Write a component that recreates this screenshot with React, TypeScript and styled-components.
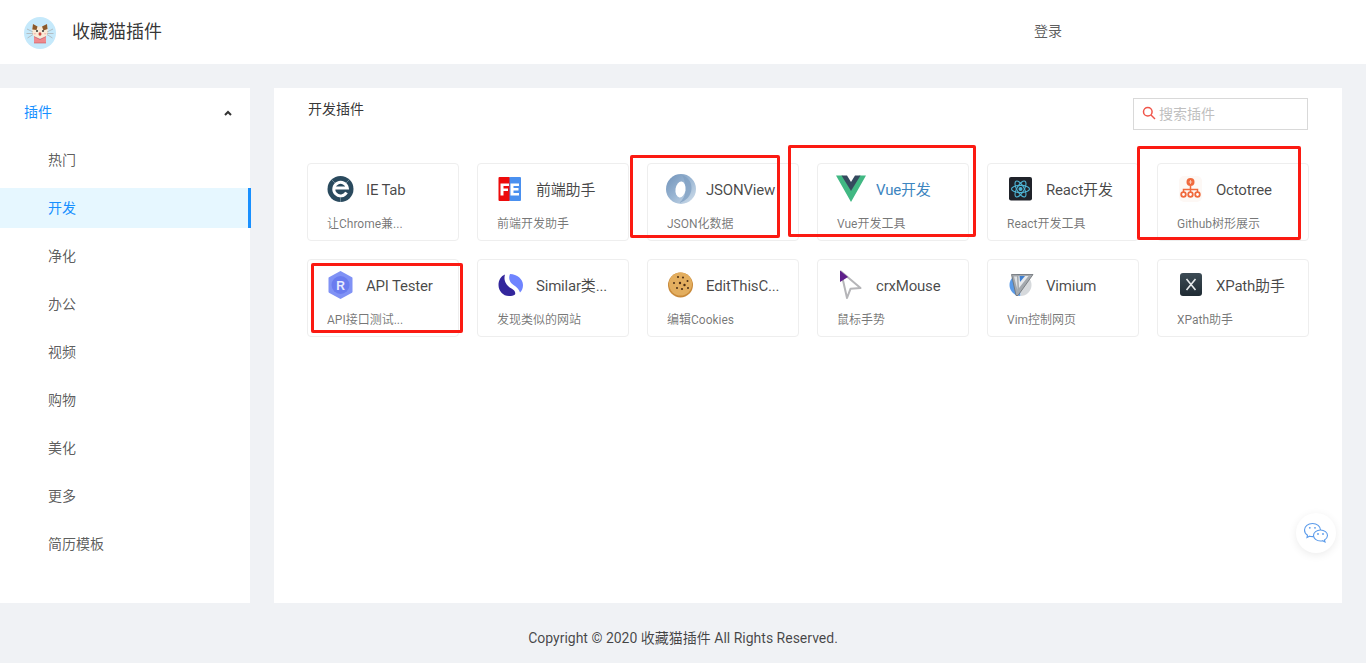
import React from "react";
import styled, { createGlobalStyle } from "styled-components";

const Global = createGlobalStyle`
  html, body { margin: 0; padding: 0; background: #f0f2f5; }
  body { font-family: Roboto, "Noto Sans CJK SC", sans-serif; font-size: 14px; color: rgba(0,0,0,.65); }
  * { box-sizing: border-box; }
`;

const Page = styled.div`
  position: relative;
  width: 1366px;
  height: 663px;
  overflow: hidden;
  display: flex;
  flex-direction: column;
`;
const Header = styled.header`
  height: 64px;
  background: #fff;
  display: flex;
  align-items: center;
  padding-left: 24px;
`;
const Logo = styled.svg`
  width: 32px;
  height: 32px;
  margin-top: 2px;
`;
const Brand = styled.div`
  margin-left: 16px;
  font-size: 18px;
  line-height: 24px;
  color: rgba(0,0,0,.8);
`;
const Login = styled.a`
  margin-left: 872px;
  font-size: 14px;
  line-height: 20px;
  margin-top: -2px;
  color: rgba(0,0,0,.65);
`;
const Main = styled.div`
  display: flex;
  gap: 24px;
  padding-top: 24px;
  height: 539px;
`;
const Side = styled.nav`
  width: 250px;
  background: #fff;
  padding-top: 4px;
`;
const MenuHead = styled.div`
  height: 40px;
  display: flex;
  align-items: center;
  justify-content: space-between;
  padding: 0 18px 2px 24px;
  color: #1890ff;
  margin-bottom: 8px;
`;
const Caret = styled.svg`
  width: 8px;
  height: 6px;
  margin-top: 3px;
`;
const MenuItem = styled.div<{ $active?: boolean }>`
  height: 40px;
  line-height: 40px;
  padding-left: 48px;
  margin-bottom: 8px;
  color: ${(p) => (p.$active ? "#1890ff" : "rgba(0,0,0,.65)")};
  background: ${(p) => (p.$active ? "#e6f7ff" : "transparent")};
  border-right: ${(p) => (p.$active ? "3px solid #1890ff" : "0")};
  margin-right: ${(p) => (p.$active ? "-1px" : "0")};
`;
const Content = styled.main`
  width: 1068px;
  background: #fff;
  padding: 10px 33px 0;
`;
const TopRow = styled.div`
  display: flex;
  justify-content: space-between;
  align-items: flex-start;
  height: 65px;
  padding-left: 1px;
`;
const Heading = styled.h2`
  margin: 0;
  font-size: 14px;
  font-weight: 400;
  line-height: 22px;
  color: rgba(0,0,0,.8);
`;
const Search = styled.div`
  width: 175px;
  height: 32px;
  margin: 0 1px 0 0;
  border: 1px solid #d9d9d9;
  display: flex;
  align-items: center;
  padding: 0 0 2px 8px;
  gap: 3px;
  color: #bfbfbf;
  font-size: 14px;
`;
const Grid = styled.div`
  display: grid;
  grid-template-columns: repeat(6, 152px);
  grid-auto-rows: 78px;
  gap: 18px;
`;
const Card = styled.div`
  border: 1px solid #eee;
  border-radius: 4px;
  padding: 10px 0 0 18px;
  background: #fff;
`;
const CardTop = styled.div`
  display: flex;
  align-items: center;
  gap: 10px;
  height: 30px;
`;
const IconSvg = styled.svg`
  width: 30px;
  height: 30px;
  flex: none;
`;
const Title = styled.div<{ $hover?: boolean }>`
  margin-top: 2px;
  font-size: 15px;
  letter-spacing: -0.2px;
  line-height: 22px;
  white-space: nowrap;
  color: ${(p) => (p.$hover ? "#3d85c0" : "rgba(0,0,0,.72)")};
`;
const Desc = styled.div`
  margin: 11px 0 0 1px;
  font-size: 12px;
  line-height: 18px;
  white-space: nowrap;
  color: rgba(0,0,0,.55);
`;
const Footer = styled.footer`
  flex: 1;
  display: flex;
  align-items: center;
  justify-content: center;
  font-size: 14px;
  padding-top: 8px;
  color: rgba(0,0,0,.72);
`;
const Mark = styled.div<{ $x: number; $y: number; $w: number; $h: number }>`
  position: absolute;
  left: ${(p) => p.$x}px;
  top: ${(p) => p.$y}px;
  width: ${(p) => p.$w}px;
  height: ${(p) => p.$h}px;
  border: 3px solid #fb1a12;
  border-radius: 2px;
  pointer-events: none;
`;
const Fab = styled.div`
  position: absolute;
  left: 1296px;
  top: 513px;
  width: 40px;
  height: 40px;
  border-radius: 50%;
  background: #fff;
  box-shadow: 0 2px 8px rgba(0,0,0,.08);
  display: flex;
  align-items: center;
  justify-content: center;
`;

const Cat = () => (
  <Logo viewBox="0 0 32 32">
    <circle cx="16" cy="16" r="16" fill="#c5e9fb" />
    <path d="M9 7l3 2.500h8L23 7l1 8c0 3.500-3.500 6-8 6s-8-2.500-8-6z" fill="#f8ead6" />
    <path d="M9 7l4.500 2.500-1 3.500-4.200-.5zM23 7l-5 2.500 1.500 4 4-1.500z" fill="#8b5a2b" />
    <path d="M3 12l6 3M2.500 16.500H9M3.500 21l5.500-3.500M29 12l-6 3M29.500 16.500H23M28.500 21L23 17.500" stroke="#a9a9a9" strokeWidth=".7" />
    <circle cx="13" cy="14" r="1" fill="#333" />
    <circle cx="19" cy="14" r="1" fill="#333" />
    <ellipse cx="10.800" cy="16.800" rx="1.200" ry=".8" fill="#f7b9b0" />
    <ellipse cx="21.200" cy="16.800" rx="1.200" ry=".8" fill="#f7b9b0" />
    <ellipse cx="16" cy="17" rx="1.500" ry="1.800" fill="#c9453f" />
    <path d="M10 19.500l6 2.500 6-2.500V26H10z" fill="#ee8a8e" />
    <path d="M10 19.500l6 3 6-3M10 26h12" fill="none" stroke="#c9565c" strokeWidth=".6" />
  </Logo>
);

const icons: Record<string, React.ReactNode> = {
  ie: (
    <>
      <circle cx="14.500" cy="15" r="13" fill="#2a4a5e" />
      <path d="M20.500 18.500A6.800 6.800 0 1 1 21.300 14H8.500" fill="none" stroke="#fff" strokeWidth="3" />
      <path d="M14.500 24v4M6 6l3 3M23 6l-3 3" stroke="#7d95a4" strokeWidth=".8" />
    </>
  ),
  fe: (
    <>
      <rect x="2.500" y="3" width="11.500" height="24" rx="1" fill="#ed0b0b" />
      <rect x="13.500" y="3" width="11.500" height="24" rx="1" fill="#4a90ef" />
      <path d="M4.500 9.500H13V12H7.500v2.500H12V17H7.500v4.500h-3z" fill="#fff" />
      <path d="M14.500 9.500h8.500V12h-5.500v2h5v2.500h-5V19h5.500v2.500h-8.500z" fill="#fff" />
    </>
  ),
  json: (
    <>
      <defs>
        <linearGradient id="jg" x1="0" y1="0" x2="1" y2="1">
          <stop offset="0" stopColor="#6f91b8" />
          <stop offset=".5" stopColor="#9ab6d3" />
          <stop offset="1" stopColor="#d3e0ec" />
        </linearGradient>
      </defs>
      <circle cx="15" cy="15" r="15" fill="url(#jg)" />
      <path d="M16 1c6 2 10 7 9.500 14S20 27 13 29c4-3 6.500-8 6.500-13.500S18.500 5 16 1z" fill="#7f9fc2" opacity=".75" />
      <ellipse cx="14.500" cy="15.500" rx="5" ry="8" fill="#fff" transform="rotate(8 14.500 15.500)" />
    </>
  ),
  vue: (
    <>
      <path d="M0 1.500h6.500L15 16 23.500 1.500H30L15 28z" fill="#41b883" />
      <path d="M5.500 1.500H11L15 8l4-6.500h5.500L15 17z" fill="#35495e" />
    </>
  ),
  react: (
    <>
      <rect x="3" y="3" width="23" height="23.500" rx="2" fill="#20232a" />
      <g fill="none" stroke="#4fb6d6" strokeWidth="1.100">
        <ellipse cx="14.500" cy="15" rx="9" ry="3.600" />
        <ellipse cx="14.500" cy="15" rx="9" ry="3.600" transform="rotate(60 14.500 15)" />
        <ellipse cx="14.500" cy="15" rx="9" ry="3.600" transform="rotate(120 14.500 15)" />
      </g>
      <circle cx="14.500" cy="15" r="2" fill="#4fb6d6" />
    </>
  ),
  octo: (
    <>
      <rect x="3" y="2" width="23" height="26" rx="5" fill="#fdf8f5" />
      <circle cx="14.500" cy="8" r="4" fill="#f0693c" />
      <path d="M14.500 6v4M12.800 8h3.400" stroke="#fbd4c4" strokeWidth=".8" />
      <path d="M14.500 12v6M7.500 18v-2.500h14V18" fill="none" stroke="#f0693c" strokeWidth="1.500" />
      <g fill="#fff" stroke="#f0693c" strokeWidth="1.800">
        <circle cx="7.500" cy="20.500" r="2.300" />
        <circle cx="14.500" cy="20.500" r="2.300" />
        <circle cx="21.500" cy="20.500" r="2.300" />
      </g>
    </>
  ),
  api: (
    <>
      <path d="M14.500 2l11 6.200v13.600l-11 6.200-11-6.200V8.200z" fill="#8092f5" stroke="#8092f5" strokeWidth="2" strokeLinejoin="round" />
      <circle cx="14.500" cy="15" r="9" fill="#6a7cef" />
      <text x="14.700" y="19.500" textAnchor="middle" fontFamily="Liberation Sans" fontWeight="700" fontSize="12" fill="#e8ebff">R</text>
    </>
  ),
  similar: (
    <>
      <path d="M9 4.500C5 6 2.500 10 2.500 15c0 6 4.500 11 10.500 11 2.500 0 4.500-.5 6-1.500 1-2.500-1-4.500-3.500-6C11 16 7 11 9 4.500z" fill="#33269c" />
      <path d="M14 4c7 0 13 5 13 11 0 3-1 5.500-3 7.500-1-3.500-3.500-5.500-6.500-7.500-3.500-2.200-5.500-6.500-3.500-11z" fill="#6f84ff" />
    </>
  ),
  cookie: (
    <>
      <circle cx="14.500" cy="15" r="12.500" fill="#c98a3a" />
      <circle cx="14.500" cy="14" r="11.500" fill="#e3ae5f" />
      <g fill="#4a2c14">
        <circle cx="12" cy="7" r="1" /><circle cx="17" cy="7.500" r="1" /><circle cx="21.500" cy="11" r="1" />
        <circle cx="8" cy="13" r="1" /><circle cx="14" cy="13" r="1.200" /><circle cx="18.500" cy="15" r="1.200" />
        <circle cx="11" cy="18" r="1" /><circle cx="16" cy="19" r="1.100" /><circle cx="22" cy="18" r="1" />
      </g>
    </>
  ),
  mouse: (
    <>
      <path d="M5 1.500L24.500 18l-10 .8L11 28z" fill="#fff" stroke="#b5b5b8" strokeWidth="2" strokeLinejoin="round" />
      <path d="M4 0.500l8 6.500-8 5z" fill="#5e1f8a" />
    </>
  ),
  vim: (
    <>
      <path d="M14.500 4a11 11 0 0 0 0 22z" fill="#5b9be8" />
      <path d="M14.500 4a11 11 0 0 1 0 22z" fill="#d6d9dc" />
      <path d="M5.500 4.500H27L12 25.500H10z" fill="#a4a9ae" stroke="#6a6f74" strokeWidth=".8" strokeLinejoin="round" />
      <path d="M8 6.500h3L11.500 20z" fill="#dfe2e5" />
      <path d="M12.500 6h10L13 18z" fill="#e6e9ec" />
      <path d="M13.500 6h5.500l-5 6z" fill="#3f7fd0" />
    </>
  ),
  xpath: (
    <>
      <defs>
        <linearGradient id="xg" x1="0" y1="0" x2="0" y2="1">
          <stop offset="0" stopColor="#3c4b55" />
          <stop offset="1" stopColor="#1f2b33" />
        </linearGradient>
      </defs>
      <rect x="4" y="3" width="22" height="23" rx="3" fill="url(#xg)" />
      <path d="M10.500 9l9 11M19.500 9l-9 11" stroke="#e6eaec" strokeWidth="1.600" />
    </>
  ),
};

const cards = [
  { i: "ie", t: "IE Tab", d: "让Chrome兼..." },
  { i: "fe", t: "前端助手", d: "前端开发助手" },
  { i: "json", t: "JSONView", d: "JSON化数据" },
  { i: "vue", t: "Vue开发", d: "Vue开发工具", hover: true },
  { i: "react", t: "React开发", d: "React开发工具" },
  { i: "octo", t: "Octotree", d: "Github树形展示" },
  { i: "api", t: "API Tester", d: "API接口测试..." },
  { i: "similar", t: "Similar类...", d: "发现类似的网站" },
  { i: "cookie", t: "EditThisC...", d: "编辑Cookies" },
  { i: "mouse", t: "crxMouse", d: "鼠标手势" },
  { i: "vim", t: "Vimium", d: "Vim控制网页" },
  { i: "xpath", t: "XPath助手", d: "XPath助手" },
];

const menu = ["热门", "开发", "净化", "办公", "视频", "购物", "美化", "更多", "简历模板"];
const marks = [
  { x: 630, y: 155, w: 150, h: 83 },
  { x: 788, y: 145, w: 188, h: 92 },
  { x: 1137, y: 146, w: 164, h: 94 },
  { x: 311, y: 263, w: 152, h: 70 },
];

export default function App() {
  return (
    <Page>
      <Global />
      <Header>
        <Cat />
        <Brand>收藏猫插件</Brand>
        <Login>登录</Login>
      </Header>
      <Main>
        <Side>
          <MenuHead>
            插件
            <Caret viewBox="0 0 8 6">
              <path d="M1 5l3-3 3 3" fill="none" stroke="#333" strokeWidth="2" />
            </Caret>
          </MenuHead>
          {menu.map((m) => (
            <MenuItem key={m} $active={m === "开发"}>{m}</MenuItem>
          ))}
        </Side>
        <Content>
          <TopRow>
            <Heading>开发插件</Heading>
            <Search>
              <svg width="14" height="14" viewBox="0 0 14 14" fill="none" stroke="#f0554a" strokeWidth="1.500">
                <circle cx="5.800" cy="5.800" r="4.300" />
                <path d="M9 9l4 4" />
              </svg>
              搜索插件
            </Search>
          </TopRow>
          <Grid>
            {cards.map((c) => (
              <Card key={c.i}>
                <CardTop>
                  <IconSvg viewBox="0 0 30 30">{icons[c.i]}</IconSvg>
                  <Title $hover={c.hover}>{c.t}</Title>
                </CardTop>
                <Desc>{c.d}</Desc>
              </Card>
            ))}
          </Grid>
        </Content>
      </Main>
      <Footer>Copyright © 2020 收藏猫插件 All Rights Reserved.</Footer>
      {marks.map((m) => (
        <Mark key={m.x} $x={m.x} $y={m.y} $w={m.w} $h={m.h} />
      ))}
      <Fab>
        <svg width="26" height="22" viewBox="0 0 26 22" fill="#fff" stroke="#5b9bea" strokeWidth="1.100">
          <path d="M9.500 1.500C5 1.500 1.500 4.300 1.500 8c0 2.200 1.200 4 3 5.200L4 15.500l2.600-1.300c1 .3 1.900.4 2.900.4 4.500 0 8-2.900 8-6.600s-3.500-6.500-8-6.500z" />
          <path d="M17.500 8C13.600 8 10.500 10.500 10.500 13.500S13.600 19 17.500 19c.8 0 1.500-.1 2.200-.3l2.300 1.300-.5-2c1.800-1.100 3-2.700 3-4.500C24.500 10.500 21.400 8 17.500 8z" />
          <g fill="#5b9bea" stroke="none">
            <circle cx="6.800" cy="5.800" r=".9" /><circle cx="12" cy="5.800" r=".9" />
            <circle cx="15" cy="12" r=".9" /><circle cx="20" cy="12" r=".9" />
          </g>
        </svg>
      </Fab>
    </Page>
  );
}
